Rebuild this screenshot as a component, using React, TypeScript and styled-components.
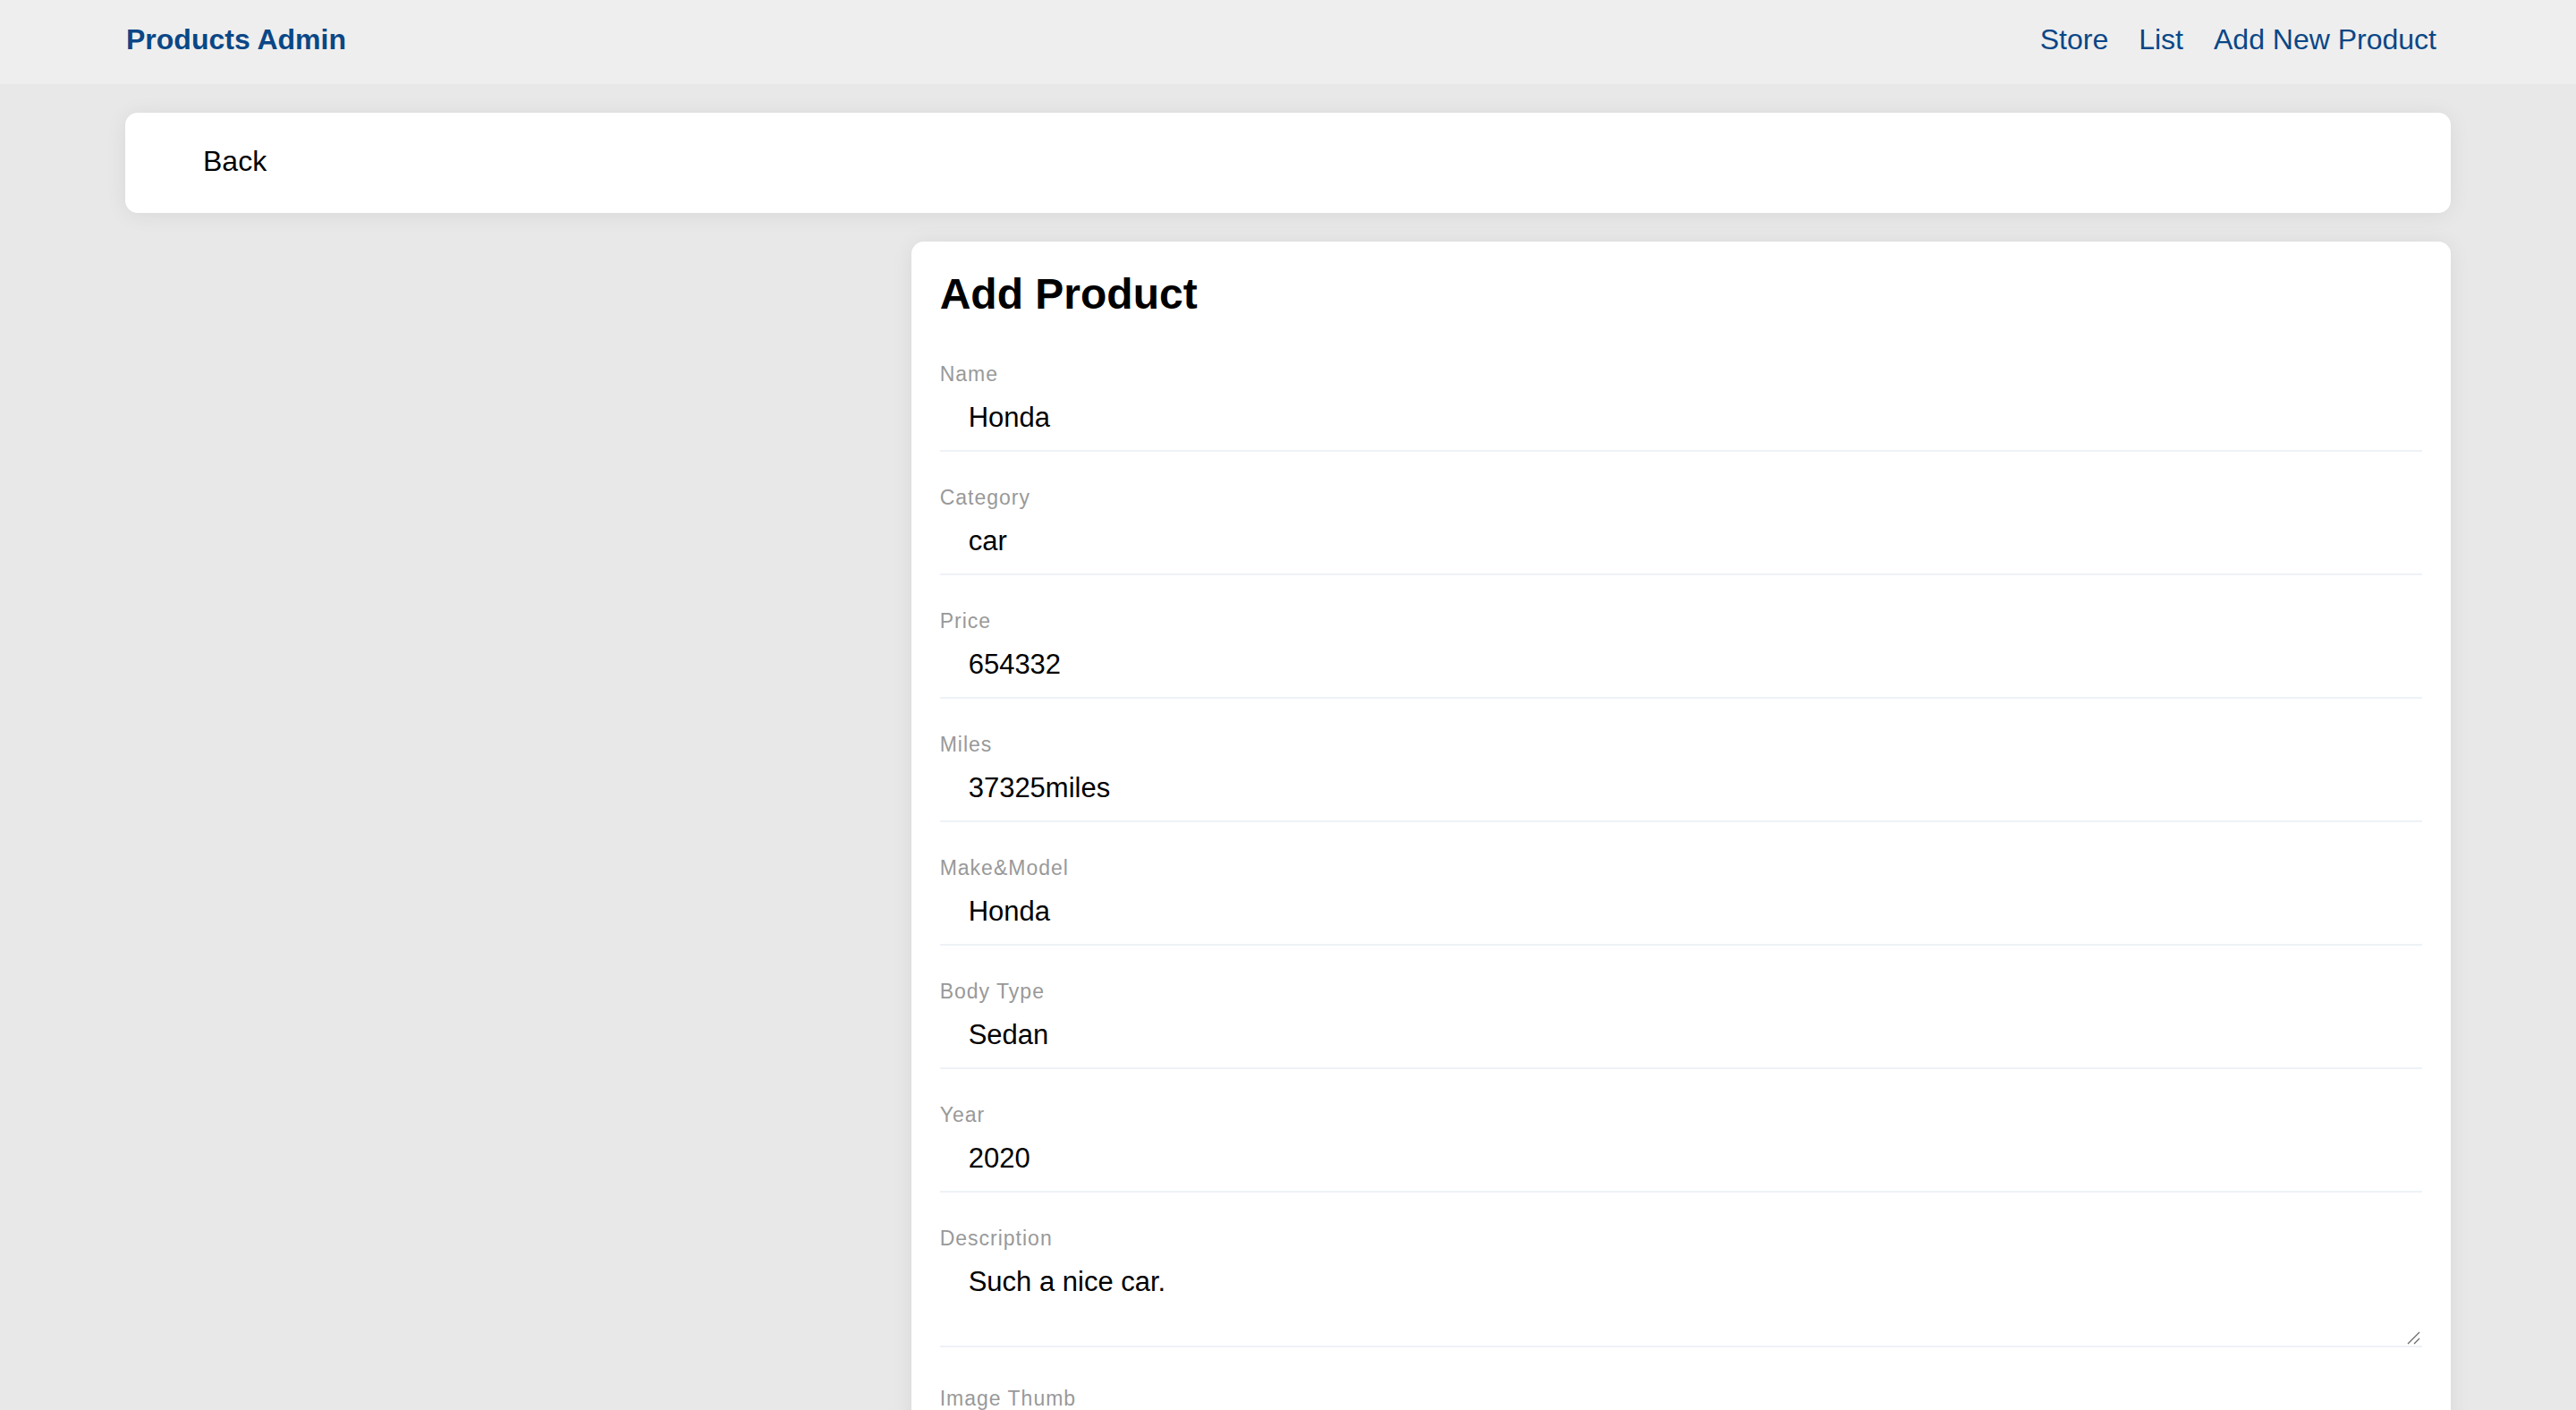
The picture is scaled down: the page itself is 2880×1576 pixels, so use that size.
import React from 'react';
import styled, { createGlobalStyle } from 'styled-components';

const GlobalStyle = createGlobalStyle`
  * {
    box-sizing: border-box;
  }
  body {
    margin: 0;
    background: #e8e8e8;
    font-family: 'Liberation Sans', Arial, Helvetica, sans-serif;
    color: #000;
  }
`

interface Field {
  label: string
  value: string
  multiline?: boolean
}

const fields: Field[] = [
  { label: 'Name', value: 'Honda' },
  { label: 'Category', value: 'car' },
  { label: 'Price', value: '654332' },
  { label: 'Miles', value: '37325miles' },
  { label: 'Make&Model', value: 'Honda' },
  { label: 'Body Type', value: 'Sedan' },
  { label: 'Year', value: '2020' },
  { label: 'Description', value: 'Such a nice car.', multiline: true },
  { label: 'Image Thumb', value: '' },
]

export default function App() {
  return (
    <>
      <GlobalStyle />
      <TopBar>
        <TopBarInner>
          <Brand>Products Admin</Brand>
          <Nav>
            <NavLink>Store</NavLink>
            <NavLink>List</NavLink>
            <NavLink>Add New Product</NavLink>
          </Nav>
        </TopBarInner>
      </TopBar>

      <Main>
        <BackCard>
          <BackButton>Back</BackButton>
        </BackCard>

        <FormRow>
          <Aside />
          <FormCard>
            <FormTitle>Add Product</FormTitle>
            {fields.map(field => (
              <FieldGroup key={field.label} extra={field.multiline ? 6 : 0}>
                <Label>{field.label}</Label>
                {field.multiline ? (
                  <TextAreaWrap>
                    <TextArea defaultValue={field.value} />
                    <Grip width="15" height="15" viewBox="0 0 15 15">
                      <path d="M1 14 L14 1 M8 14 L14 8" stroke="#6b6b6b" strokeWidth="1.3" fill="none" />
                    </Grip>
                  </TextAreaWrap>
                ) : (
                  <Input type="text" defaultValue={field.value} />
                )}
              </FieldGroup>
            ))}
            <SubmitButton>Save</SubmitButton>
          </FormCard>
        </FormRow>
      </Main>
    </>
  )
}

const TopBar = styled.header`
  background: #eeeeee;
  height: 94px;
  padding: 0 140px 5px;
  display: flex;
  align-items: center;
`

const TopBarInner = styled.div`
  flex: 1;
  display: flex;
  align-items: center;
  justify-content: space-between;
`

const Brand = styled.a`
  font-size: 32px;
  font-weight: 700;
  color: #0a4786;
  padding-left: 1px;
`

const Nav = styled.nav`
  display: flex;
  align-items: center;
`

const NavLink = styled.a`
  font-size: 32px;
  color: #0a4786;
  padding: 0 16px 0 18px;
  cursor: pointer;
`

const Main = styled.main`
  padding: 32px 140px 64px;
  display: flex;
  flex-direction: column;
  gap: 32px;
`

const Card = styled.div`
  background: #fff;
  border-radius: 14px;
  box-shadow: 0 2px 24px rgba(0, 0, 0, 0.07);
`

const BackCard = styled(Card)`
  height: 112px;
  padding: 0 87px 4px;
  display: flex;
  align-items: center;
`

const BackButton = styled.button`
  border: none;
  background: none;
  padding: 0;
  font-family: inherit;
  font-size: 32px;
  color: #000;
  cursor: pointer;
`

const FormRow = styled.div`
  display: grid;
  grid-template-columns: 1fr 2fr;
  column-gap: 18px;
  align-items: start;
`

const Aside = styled.div``

const FormCard = styled(Card)`
  padding: 32px;
`

const FormTitle = styled.h2`
  margin: 0 0 48px;
  font-size: 48px;
  line-height: 54px;
  font-weight: 700;
`

const FieldGroup = styled.div<{ extra: number }>`
  display: flex;
  flex-direction: column;
  margin-bottom: ${props => 37 + props.extra}px;
`

const Label = styled.label`
  font-size: 23px;
  line-height: 28px;
  letter-spacing: 1px;
  color: #999999;
`

const fieldText = `
  width: 100%;
  border: none;
  border-bottom: 2px solid #eef2f7;
  outline: none;
  background: transparent;
  font-family: 'Liberation Sans', Arial, Helvetica, sans-serif;
  font-size: 31px;
  line-height: 36px;
  color: #000;
  padding: 17px 32px 18px;
`

const Input = styled.input`
  ${fieldText}
  height: 73px;
`

const TextAreaWrap = styled.div`
  position: relative;
`

const TextArea = styled.textarea`
  ${fieldText}
  display: block;
  height: 108px;
  resize: none;
`

const Grip = styled.svg`
  position: absolute;
  right: 2px;
  bottom: 3px;
  pointer-events: none;
`

const SubmitButton = styled.button`
  margin-top: 16px;
  border: none;
  border-radius: 10px;
  background: #0a4786;
  color: #fff;
  font-family: inherit;
  font-size: 30px;
  padding: 18px 48px;
`
